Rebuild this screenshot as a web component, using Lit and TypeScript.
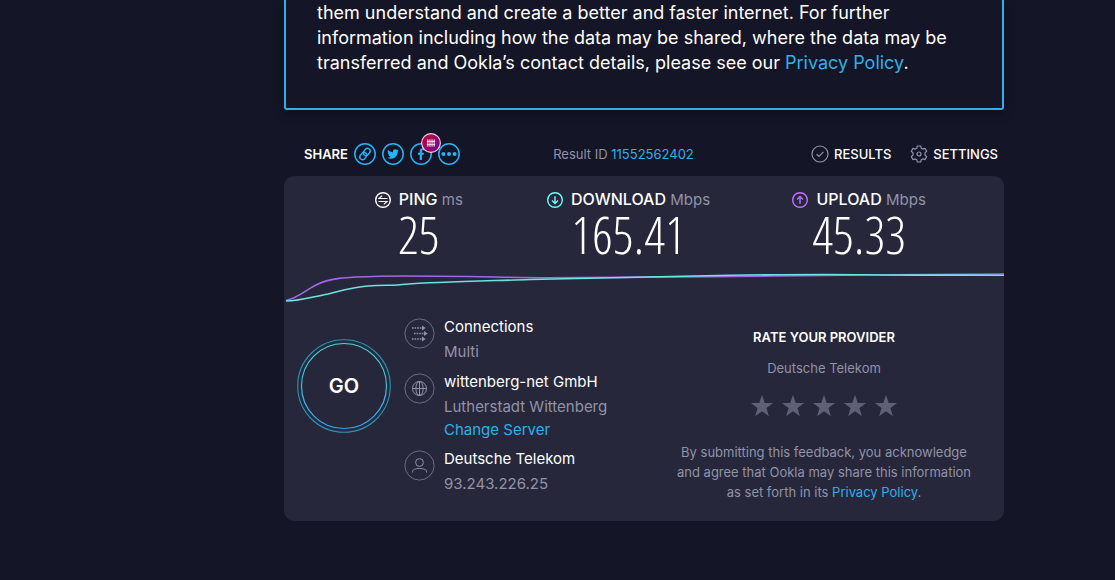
import { LitElement, html, css, svg } from "lit";
import { customElement, property, state } from "lit/decorators.js";

const icons = {
  link: svg`<g fill="none" stroke="currentColor" stroke-width="1.4" transform="rotate(-50 11 11)"><rect x="4.4" y="8.3" width="7.8" height="5.4" rx="2.7"/><rect x="9.8" y="8.3" width="7.8" height="5.4" rx="2.7"/></g>`,
  twitter: svg`<path transform="translate(5.2 5.2) scale(.485)" fill="currentColor" d="M23.95 4.57a10 10 0 0 1-2.82.77 4.96 4.96 0 0 0 2.16-2.72c-.95.55-2 .95-3.13 1.18a4.92 4.92 0 0 0-8.38 4.48C7.69 8.1 4.07 6.13 1.64 3.16a4.92 4.92 0 0 0 1.52 6.57 4.9 4.9 0 0 1-2.23-.61v.06a4.92 4.92 0 0 0 3.95 4.83 5 5 0 0 1-2.21.08 4.94 4.94 0 0 0 4.6 3.42A9.87 9.87 0 0 1 0 19.54a14 14 0 0 0 7.55 2.21c9.05 0 14-7.5 14-13.98 0-.21 0-.42-.02-.63a9.94 9.94 0 0 0 2.46-2.55z"/>`,
  facebook: svg`<path fill="currentColor" d="M9.7 17v-5.2H7.9V9.7h1.8V8.1c0-1.9 1.1-2.9 2.8-2.9.7 0 1.3.1 1.6.1v1.9h-1.1c-.9 0-1.1.5-1.1 1.1v1.4h2.1l-.3 2.1h-1.8V17z"/>`,
  more: svg`<g fill="currentColor"><circle cx="5.4" cy="11" r="2"/><circle cx="11" cy="11" r="2"/><circle cx="16.6" cy="11" r="2"/></g>`,
};

@customElement("share-button")
class ShareButton extends LitElement {
  @property() label = "";
  @property() icon: keyof typeof icons = "link";
  static styles = css`
    :host { display: block; }
    .share { display: block; width: 22px; height: 22px; padding: 0; border: 0; background: none; color: #26b4f6; cursor: pointer; }
    .glyph { display: block; width: 22px; height: 22px; }
  `;
  render() {
    return html`<button class="share" aria-label=${this.label}>
      <svg class="glyph" viewBox="0 0 22 22" aria-hidden="true">
        <circle cx="11" cy="11" r="10.2" fill="none" stroke="currentColor" stroke-width="1.5" />
        ${icons[this.icon]}
      </svg>
    </button>`;
  }
}

@customElement("speed-stat")
class SpeedStat extends LitElement {
  @property() name = "";
  @property() unit = "";
  @property() value = "";
  @property() kind = "ping";
  static styles = css`
    :host { display: flex; flex-direction: column; align-items: center; }
    .head { display: flex; align-items: center; gap: 8px; font-size: 16px; line-height: 20px; font-weight: 500; color: #fff; white-space: nowrap; }
    .unit { color: #9193a8; font-weight: 400; font-size: 15px; }
    .mark { width: 16px; height: 16px; fill: none; stroke: currentColor; stroke-width: 1.4; }
    .ping { color: #fff; }
    .download { color: #6afff3; }
    .upload { color: #bf71ff; }
    .value { font-family: "Open Sans Condensed Light", "Roboto Condensed", sans-serif; font-weight: 300; font-size: 52px; line-height: 48px; color: #fff; }
  `;
  render() {
    const glyph =
      this.kind === "download" ? svg`<path d="M8 4.2v7.2M5 8.4l3 3 3-3"/>`
      : this.kind === "upload" ? svg`<path d="M8 11.8V4.6M5 7.6l3-3 3 3"/>`
      : svg`<path stroke-width="1.100" d="M12.500 6.500H4l3.200-2.800M3.500 9.500H12l-3.200 2.800"/>`;
    return html`
      <div class="head">
        <svg class="mark ${this.kind}" viewBox="0 0 16 16" aria-hidden="true"><circle cx="8" cy="8" r="7.3" />${glyph}</svg>
        <span>${this.name} <span class="unit">${this.unit}</span></span>
      </div>
      <div class="value">${this.value}</div>`;
  }
}

@customElement("app-root")
class AppRoot extends LitElement {
  @state() private rating = 0;

  static styles = css`
    :host { display: block; box-sizing: border-box; min-height: 100vh; padding: 0 111px 59px 284px; background: #141526; color: #fff; font-family: Inter, "Liberation Sans", sans-serif; font-size: 13px; }
    a { color: #2fb0ec; text-decoration: none; }
    .consent { padding: 0 31px 33px; border: 2px solid #2fb0ec; border-top: 0; border-radius: 0 0 3px 3px; box-shadow: 0 2px 12px rgba(0, 0, 0, 0.35); font-size: 18px; line-height: 25px; }
    .text { margin: 0; }
    .bar { display: flex; align-items: center; padding: 33px 6px 11px 20px; line-height: 22px; white-space: nowrap; }
    .group { display: flex; align-items: center; gap: 6px; }
    .caption { font-weight: 600; }
    .shared { position: relative; }
    .badge { position: absolute; left: 11px; top: -10px; width: 20px; height: 20px; }
    .result { margin: 0 auto; color: #9193a8; }
    .tools { display: flex; gap: 19px; padding-left: 24px; }
    .tool { display: flex; align-items: center; gap: 5px; padding: 0; border: 0; background: none; color: #fff; font: inherit; font-weight: 500; line-height: 22px; cursor: pointer; }
    .tool-icon { width: 18px; height: 18px; fill: none; stroke: #9193a8; stroke-width: 1.2; }
    .card { border-radius: 10px; background: #26273b; padding-bottom: 19px; }
    .stats { display: grid; grid-template-columns: 5fr 5fr 6fr; padding: 13px 19px 0 30px; }
    .chart { display: block; width: 100%; height: 40px; margin-top: 7px; fill: none; stroke-width: 1.6; }
    .chart path { vector-effect: non-scaling-stroke; }
    .body { display: flex; align-items: flex-start; padding: 9px 27px 0 13px; }
    .go { flex: none; display: grid; place-items: center; width: 94px; height: 94px; margin-top: 25px; padding: 0; border: 0; background: none; color: #fff; font: 600 20px/24px Inter, sans-serif; cursor: pointer; }
    .ring { grid-area: 1 / 1; width: 94px; height: 94px; fill: none; }
    .go-text { grid-area: 1 / 1; }
    .details { flex: 1; display: flex; flex-direction: column; gap: 5px; padding-left: 13px; font-size: 15px; }
    .detail { display: flex; gap: 9px; }
    .round { flex: none; width: 31px; height: 31px; margin-top: 4px; fill: none; stroke: #9193a8; }
    .name { line-height: 26px; }
    .sub { line-height: 24px; color: #9193a8; }
    .change { display: block; line-height: 22px; }
    .rate { flex: 0 1 306px; margin: 0; padding: 13px 0 0; border: 0; text-align: center; color: #9193a8; line-height: 20px; }
    .title { margin: 0; font-size: 13px; line-height: 20px; font-weight: 600; color: #fff; }
    .provider { margin: 11px 0 0; }
    .stars { display: flex; justify-content: center; gap: 7px; margin: 16px 0 24px; }
    .star { width: 24px; height: 24px; padding: 0; border: 0; background: none; color: #5f6075; cursor: pointer; }
    .lit { color: #fff38e; }
    .star-shape { display: block; width: 24px; height: 24px; fill: currentColor; }
  `;

  private tool(label: string, shape: unknown) {
    return html`<button class="tool"><svg class="tool-icon" viewBox="0 0 18 18" aria-hidden="true">${shape}</svg>${label}</button>`;
  }

  private detail(shape: unknown, name: string, sub: string, extra: unknown = "") {
    return html`<div class="detail">
      <svg class="round" viewBox="0 0 31 31" aria-hidden="true"><circle cx="15.5" cy="15.5" r="14.6" stroke-opacity=".65" />${shape}</svg>
      <div><div class="name">${name}</div><div class="sub">${sub}</div>${extra}</div>
    </div>`;
  }

  render() {
    return html`
      <section class="consent">
        <p class="text">them understand and create a better and faster internet. For further information including how the data may be shared, where the data may be transferred and Ookla’s contact details, please see our <a href="#privacy">Privacy Policy</a>.</p>
      </section>
      <nav class="bar">
        <div class="group">
          <span class="caption">SHARE</span>
          <share-button label="Copy link" icon="link"></share-button>
          <share-button label="Twitter" icon="twitter"></share-button>
          <div class="shared">
            <share-button label="Facebook" icon="facebook"></share-button>
            <svg class="badge" viewBox="0 0 19 19" aria-hidden="true">
              <defs><linearGradient id="b" x1="0" y1="0" x2="1" y2="1"><stop offset=".1" stop-color="#c8003c" /><stop offset=".9" stop-color="#6e0a96" /></linearGradient></defs>
              <circle cx="9.5" cy="9.5" r="8.9" fill="url(#b)" stroke="#f3d3e2" stroke-width="1.1" />
              <path d="M6.500 6v7M8.500 6v7M10.500 6v7M12.500 6v7" stroke="#fff" stroke-width=".9" fill="none" /><path d="M5.500 8h8M5.500 11h8" stroke="#fff" stroke-width=".7" fill="none" />
            </svg>
          </div>
          <share-button label="More" icon="more"></share-button>
        </div>
        <div class="result">Result ID <a href="#result">11552562402</a></div>
        <div class="tools">
          ${this.tool("RESULTS", svg`<circle cx="9" cy="9" r="8"/><path d="M5.6 9.2l2.4 2.3 4.4-4.7"/>`)}
          ${this.tool("SETTINGS", svg`<circle cx="9" cy="9" r="2"/><path stroke-linejoin="round" d="M7.3 1h3.4l.5 2.2 1.6.9 2.2-.7 1.7 2.9-1.7 1.6v2.2l1.7 1.6-1.7 2.9-2.2-.7-1.6.9-.5 2.2H7.3l-.5-2.2-1.6-.9-2.2.7-1.7-2.9L3 10.1V7.9L1.3 6.3 3 3.4l2.2.7 1.6-.9z"/>`)}
        </div>
      </nav>
      <main class="card">
        <div class="stats">
          <speed-stat kind="ping" name="PING" unit="ms" value="25"></speed-stat>
          <speed-stat kind="download" name="DOWNLOAD" unit="Mbps" value="165.41"></speed-stat>
          <speed-stat kind="upload" name="UPLOAD" unit="Mbps" value="45.33"></speed-stat>
        </div>
        <svg class="chart" viewBox="0 0 720 40" preserveAspectRatio="none" aria-hidden="true">
          <path stroke="#a566e6" d="M2 35.5C14 33 22 25 31 20.5C44 13 60 12 96 11.2C150 10.5 200 12 266 12.8C340 12.5 400 11.5 490 11C560 10 650 9.5 720 9" />
          <path stroke="#6be3e0" d="M2 36C16 36 28 32 44 29C60 25 70 22 84 21C105 20 110 20.5 122 19.2C150 17 200 16 246 14.5C300 13.5 400 11.2 446 10.2C500 9.5 540 9 580 9.7C640 10.4 680 10 720 10.3" />
        </svg>
        <div class="body">
          <button class="go" aria-label="Go">
            <svg class="ring" viewBox="0 0 94 94" aria-hidden="true">
              <defs><linearGradient id="g" x1="0" y1="0" x2="0" y2="1"><stop stop-color="#5bd6c0" /><stop offset="1" stop-color="#3ba0ee" /></linearGradient></defs>
              <circle cx="47" cy="47" r="44.5" stroke="#1b2f48" stroke-width="3" />
              <circle cx="47" cy="47" r="46.3" stroke="#378fa8" stroke-width="1.1" />
              <circle cx="47" cy="47" r="42.5" stroke="url(#g)" stroke-width="1.2" />
            </svg>
            <span class="go-text">GO</span>
          </button>
          <div class="details">
            ${this.detail(svg`<path stroke-dasharray="1.6 1" stroke-width="1.3" d="M8 10h10M10 15.5h10M8 21h10"/><path stroke="none" fill="#9193a8" d="M18 7.6l3.6 2.4-3.6 2.4zM20 13.1l3.6 2.4-3.6 2.4zM18 18.6l3.6 2.4-3.6 2.4z"/>`, "Connections", "Multi")}
            ${this.detail(svg`<circle cx="15.5" cy="15.5" r="7"/><ellipse cx="15.5" cy="15.5" rx="3.6" ry="7"/><path d="M8.5 15.5h14M15.5 8.5v14"/>`, "wittenberg-net GmbH", "Lutherstadt Wittenberg", html`<a class="change" href="#servers">Change Server</a>`)}
            ${this.detail(svg`<circle cx="15.5" cy="12.5" r="3.9"/><path d="M8.5 22.5v-1.2c0-1.6 3-2.8 7-2.8s7 1.2 7 2.8v1.2"/>`, "Deutsche Telekom", "93.243.226.25")}
          </div>
          <section class="rate">
            <h2 class="title">RATE YOUR PROVIDER</h2>
            <p class="provider">Deutsche Telekom</p>
            <div class="stars">
              ${[1, 2, 3, 4, 5].map((n) => html`<button class="star ${n <= this.rating ? "lit" : ""}" aria-label="${n} stars" @click=${() => (this.rating = n)}>
                <svg class="star-shape" viewBox="0 0 24 24" aria-hidden="true"><path d="M12 .8l2.7 8.1 8.5.1-6.8 5.1 2.5 8.2-6.900-5-6.900 5 2.500-8.200L.8 9l8.500-.1z" /></svg>
              </button>`)}
            </div>
            <p class="text">By submitting this feedback, you acknowledge and agree that Ookla may share this information as set forth in its <a href="#privacy">Privacy Policy</a>.</p>
          </section>
        </div>
      </main>`;
  }
}
